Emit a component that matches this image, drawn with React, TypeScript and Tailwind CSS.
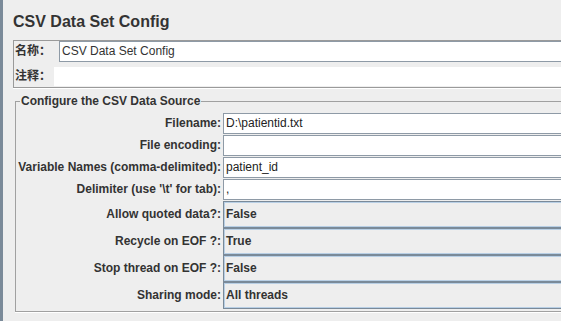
import React from 'react';

const font = "font-['Liberation_Sans','Noto_Sans_CJK_SC',sans-serif]";

const textRows = [
  { label: 'Filename:', value: 'D:\\patientid.txt' },
  { label: 'File encoding:', value: '' },
  { label: 'Variable Names (comma-delimited):', value: 'patient_id' },
  { label: "Delimiter (use '\\t' for tab):", value: ',' },
];

const comboRows = [
  { label: 'Allow quoted data?:', value: 'False' },
  { label: 'Recycle on EOF ?:', value: 'True' },
  { label: 'Stop thread on EOF ?:', value: 'False' },
  { label: 'Sharing mode:', value: 'All threads' },
];

const App: React.FC = () => {
  return (
    <div className={`w-[561px] h-[321px] overflow-hidden bg-[#eeeeee] flex text-[#333333] ${font}`}>
      <div className="w-[3px] shrink-0 bg-[#7a8a99]" />
      <div className="w-[640px] shrink-0 pl-[10px] pt-[12px]">
        <div className="h-[19px] leading-[19px] text-[16px] font-bold">CSV Data Set Config</div>

        {/* name / comment panel */}
        <div className="mt-[9px] h-[48px] border border-[#9a9a9a] shadow-[0_1px_0_#ffffff] flex flex-col">
          <div className="flex h-[21px] items-center">
            <span className="w-[45px] pl-[1px] text-[12px] font-bold leading-[21px]">名称：</span>
            <div className="flex-1 h-[21px] bg-white border border-[#8e9aa6] pl-[2px] text-[12px] leading-[19px]">
              CSV Data Set Config
            </div>
          </div>
          <div className="flex h-[19px] mt-[5px] items-center">
            <span className="w-[40px] pl-[1px] text-[12px] font-bold leading-[19px]">注释：</span>
            <div className="flex-1 h-[19px] bg-white" />
          </div>
        </div>

        {/* CSV data source group */}
        <fieldset className="mt-[6px] ml-[2px] border border-[#a0a0a0] shadow-[0_1px_0_#ffffff] pb-[2px]">
          <legend className="ml-[4px] px-[1px] text-[12px] font-bold leading-[14px]">Configure the CSV Data Source</legend>
          <div className="pt-[5px] flex flex-col gap-[1px]">
            {textRows.map((row) => (
              <div key={row.label} className="flex h-[21px] items-center">
                <span className="w-[207px] pr-[2px] text-right text-[12px] font-bold leading-[21px] whitespace-nowrap">
                  {row.label}
                </span>
                <div className="flex-1 h-[21px] bg-white border border-[#8e9aa6] pl-[2px] text-[12px] leading-[19px] text-[#222222]">
                  {row.value}
                </div>
              </div>
            ))}
            <div className="flex flex-col">
              {comboRows.map((row) => (
                <div key={row.label} className="flex h-[27px] items-center">
                  <span className="w-[207px] pr-[2px] text-right text-[12px] font-bold leading-[27px] whitespace-nowrap">
                    {row.label}
                  </span>
                  <div className="flex-1 h-[27px] bg-[#eeeeee] border border-[#7a8a99] shadow-[inset_0_0_0_1px_#b8cfe5] pl-[2px] text-[12px] font-bold leading-[25px]">
                    {row.value}
                  </div>
                </div>
              ))}
            </div>
          </div>
        </fieldset>
      </div>
    </div>
  );
};

export default App;
